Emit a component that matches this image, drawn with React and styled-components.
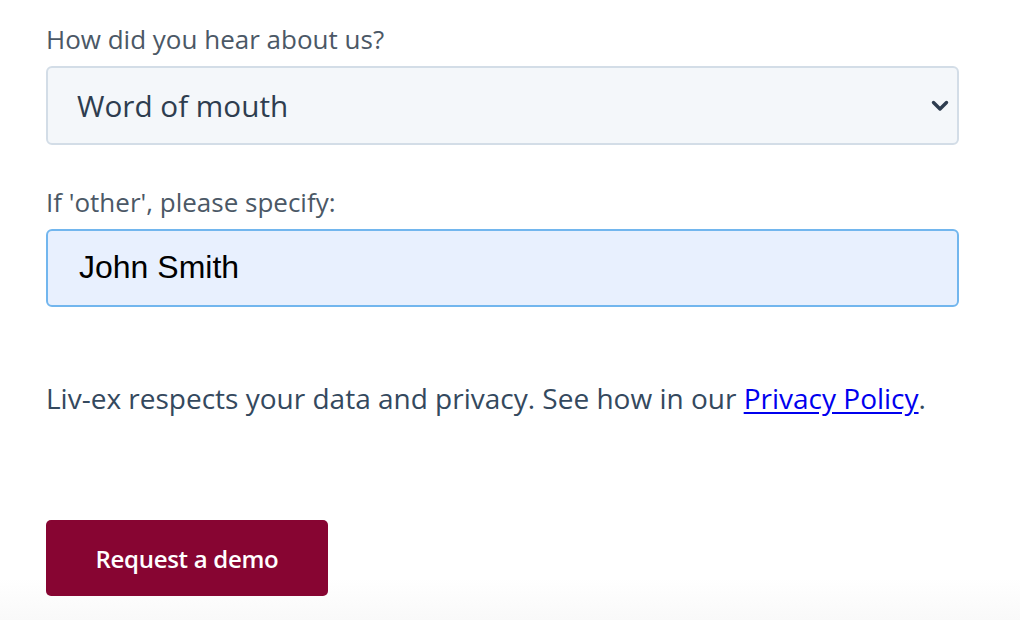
import React, { useState } from "react";
import styled, { createGlobalStyle } from "styled-components";

const GlobalStyle = createGlobalStyle`
  html, body {
    margin: 0;
    padding: 0;
  }
  body {
    min-height: 100vh;
    background: linear-gradient(to bottom, #ffffff 0, #ffffff 578px, #f9f9f9 620px);
    font-family: "Open Sans", "Noto Sans", sans-serif;
  }
`;

const Form = styled.form`
  display: flex;
  flex-direction: column;
  width: 913px;
  padding: 24px 0 0 46px;
`;

const Field = styled.div`
  display: flex;
  flex-direction: column;
  margin-bottom: ${(p) => p.gap || "0"};
`;

const Label = styled.label`
  font-size: 26px;
  line-height: 30px;
  color: #4b5866;
  margin-bottom: 12px;
`;

const SelectWrap = styled.div`
  position: relative;
`;

const Select = styled.select`
  appearance: none;
  -webkit-appearance: none;
  width: 100%;
  height: 79px;
  box-sizing: border-box;
  padding: 0 60px 0 29px;
  border: 2px solid #d3dde7;
  border-radius: 6px;
  background: #f4f7fa;
  font-family: "Open Sans", "Noto Sans", sans-serif;
  font-size: 29.7px;
  color: #2e3d4f;
  outline: none;
`;

const Chevron = styled.svg`
  position: absolute;
  right: 10px;
  top: 50%;
  width: 18px;
  height: 12px;
  transform: translateY(-50%);
  pointer-events: none;
`;

const Input = styled.input`
  width: 100%;
  height: 78px;
  box-sizing: border-box;
  padding: 0 30px 2px 31px;
  border: 2px solid #72b6ee;
  border-radius: 6px;
  background: #e8f0fe;
  font-family: "Liberation Sans", Arial, sans-serif;
  font-size: 32px;
  color: #000;
  outline: none;
  caret-color: #000;
`;

const Notice = styled.p`
  margin: 73px 0 0;
  font-size: 28px;
  line-height: 36px;
  color: #34495e;
  a {
    color: #0000ee;
    text-decoration: underline;
    text-underline-offset: 3px;
  }
`;

const Button = styled.button`
  align-self: flex-start;
  margin-top: 104px;
  width: 282px;
  height: 76px;
  border: none;
  border-radius: 5px;
  background: #870532;
  color: #fff;
  font-family: "Open Sans", "Noto Sans", sans-serif;
  font-weight: 600;
  font-size: 24px;
  letter-spacing: -0.3px;
  cursor: pointer;
`;

export default function App() {
  const [source, setSource] = useState("word");
  const [other, setOther] = useState("John Smith");

  return (
    <>
      <GlobalStyle />
      <Form onSubmit={(e) => e.preventDefault()}>
        <Field gap="42px">
          <Label htmlFor="source">How did you hear about us?</Label>
          <SelectWrap>
            <Select
              id="source"
              value={source}
              onChange={(e) => setSource(e.target.value)}
            >
              <option value="word">Word of mouth</option>
              <option value="search">Search engine</option>
              <option value="social">Social media</option>
              <option value="other">Other</option>
            </Select>
            <Chevron viewBox="0 0 18 12">
              <path
                d="M2.5 2.5 L9 9 L15.5 2.5"
                fill="none"
                stroke="#2e3d4f"
                strokeWidth="3.4"
                strokeLinecap="round"
                strokeLinejoin="round"
              />
            </Chevron>
          </SelectWrap>
        </Field>
        <Field>
          <Label htmlFor="other">If 'other', please specify:</Label>
          <Input
            id="other"
            autoFocus
            value={other}
            onChange={(e) => setOther(e.target.value)}
          />
        </Field>
        <Notice>
          Liv-ex respects your data and privacy. See how in our{" "}
          <a href="#privacy">Privacy Policy</a>.
        </Notice>
        <Button type="submit">Request a demo</Button>
      </Form>
    </>
  );
}
